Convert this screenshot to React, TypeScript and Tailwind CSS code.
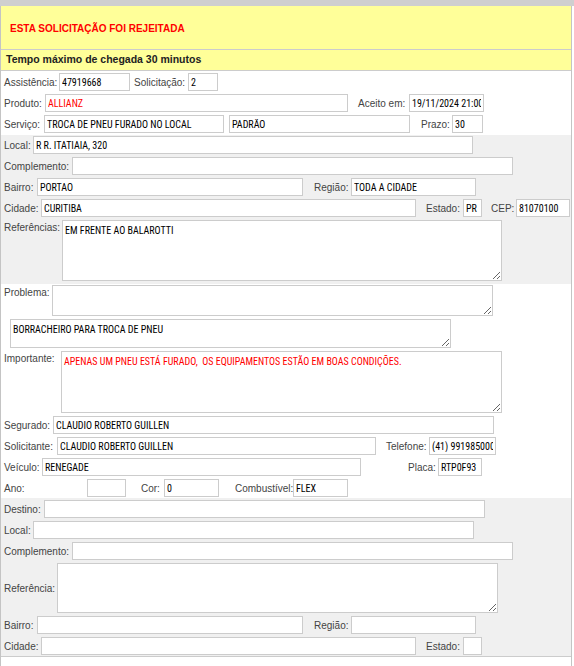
import React from 'react'
import clsx from 'clsx'

interface LabelProps {
  className?: string
  children: React.ReactNode
}

function Label({ className, children }: LabelProps) {
  return (
    <span className={clsx('shrink-0 whitespace-nowrap leading-[13px] text-[#444444]', className)}>
      {children}
    </span>
  )
}

interface FieldProps {
  className?: string
  value?: string
  red?: boolean
}

// values are shown in a narrow face, like the original form
const valueFont =
  'font-["Roboto_Condensed","Noto_Sans_Condensed","Liberation_Sans_Narrow","Noto_Sans",sans-serif] font-stretch-condensed'

function Field({ className, value = '', red }: FieldProps) {
  return (
    <input
      readOnly
      value={value}
      className={clsx(
        'h-[18px] shrink-0 border border-[#cccccc] bg-white px-[2px] text-[10px] outline-none',
        valueFont,
        red ? 'text-[#ff0000]' : 'text-black',
        className
      )}
    />
  )
}

function Area({ className, value = '', red }: FieldProps) {
  return (
    <textarea
      readOnly
      value={value}
      className={clsx(
        'shrink-0 border border-[#cccccc] bg-white px-[2px] py-[3px] text-[10px] leading-[13px] outline-none',
        valueFont,
        red ? 'text-[#ff0000]' : 'text-black',
        className
      )}
    />
  )
}

function Row({ children }: { children: React.ReactNode }) {
  return <div className="flex h-[18px] items-center pl-[3px]">{children}</div>
}

export default function App() {
  return (
    <div className='min-h-[666px] w-[574px] bg-white text-[10px] font-["Liberation_Sans",sans-serif]'>
      {/* top strip */}
      <div className="h-[6px] bg-[#cfcfcf]" />

      <div className="w-[572px] min-h-[660px] border-x border-[#c4c4c4]">
        {/* status header */}
        <div className="flex h-[44px] items-center border-b border-[#cccccc] bg-[#ffff99] pl-[9px] pt-[1px] font-bold text-[#ff0000]">
          ESTA SOLICITAÇÃO FOI REJEITADA
        </div>
        <div className="flex h-[21px] items-center border-b border-[#cccccc] bg-[#ffff99] pl-[5px] text-[10.5px] font-bold text-[#222222]">
          Tempo máximo de chegada 30 minutos
        </div>

        {/* solicitação */}
        <div className="flex flex-col gap-[3px] bg-white pt-[2px] pb-[2px]">
          <Row>
            <Label className="w-[55px]">Assistência:</Label>
            <Field className="w-[71px]" value="47919668" />
            <Label className="ml-[4px] w-[54px]">Solicitação:</Label>
            <Field className="w-[30px]" value="2" />
          </Row>
          <Row>
            <Label className="w-[41px]">Produto:</Label>
            <Field className="w-[303px]" value="ALLIANZ" red />
            <Label className="ml-[10px] w-[51px]">Aceito em:</Label>
            <Field className="w-[75px]" value="19/11/2024 21:00" />
          </Row>
          <Row>
            <Label className="w-[40px]">Serviço:</Label>
            <Field className="w-[180px]" value="TROCA DE PNEU FURADO NO LOCAL" />
            <Field className="ml-[5px] w-[181px]" value="PADRÃO" />
            <Label className="ml-[11px] w-[31px]">Prazo:</Label>
            <Field className="w-[31px]" value="30" />
          </Row>
        </div>

        {/* endereço */}
        <div className="flex flex-col gap-[3px] bg-[#f0f0f0] pt-[1px] pb-[3px]">
          <Row>
            <Label className="w-[29px]">Local:</Label>
            <Field className="w-[440px]" value="R R. ITATIAIA, 320" />
          </Row>
          <Row>
            <Label className="w-[68px]">Complemento:</Label>
            <Field className="w-[441px]" />
          </Row>
          <Row>
            <Label className="w-[33px]">Bairro:</Label>
            <Field className="w-[266px]" value="PORTAO" />
            <Label className="ml-[11px] w-[37px]">Região:</Label>
            <Field className="w-[125px]" value="TODA A CIDADE" />
          </Row>
          <Row>
            <Label className="w-[37px]">Cidade:</Label>
            <Field className="w-[375px]" value="CURITIBA" />
            <Label className="ml-[10px] w-[37px]">Estado:</Label>
            <Field className="w-[19px]" value="PR" />
            <Label className="ml-[9px] w-[25px]">CEP:</Label>
            <Field className="w-[54px]" value="81070100" />
          </Row>
          <div className="flex items-start pl-[3px]">
            <Label className="w-[58px] pt-[1px]">Referências:</Label>
            <Area className="h-[61px] w-[440px]" value="EM FRENTE AO BALAROTTI" />
          </div>
        </div>

        {/* problema e veículo */}
        <div className="flex flex-col gap-[3px] bg-white pt-[1px] pb-[1px]">
          <div className="flex items-start pl-[3px]">
            <Label className="w-[48px] pt-[1px]">Problema:</Label>
            <Area className="h-[31px] w-[441px]" />
          </div>
          <div className="flex items-start pl-[9px]">
            <Area className="h-[29px] w-[441px]" value="BORRACHEIRO PARA TROCA DE PNEU" />
          </div>
          <div className="flex items-start pl-[3px]">
            <Label className="w-[57px] pt-[1px]">Importante:</Label>
            <Area
              className="h-[62px] w-[441px]"
              value="APENAS UM PNEU ESTÁ FURADO,  OS EQUIPAMENTOS ESTÃO EM BOAS CONDIÇÕES."
              red
            />
          </div>
          <Row>
            <Label className="w-[49px]">Segurado:</Label>
            <Field className="w-[441px]" value="CLAUDIO ROBERTO GUILLEN" />
          </Row>
          <Row>
            <Label className="w-[53px]">Solicitante:</Label>
            <Field className="w-[319px]" value="CLAUDIO ROBERTO GUILLEN" />
            <Label className="ml-[10px] w-[43px]">Telefone:</Label>
            <Field className="w-[67px]" value="(41) 991985000" />
          </Row>
          <Row>
            <Label className="w-[38px]">Veículo:</Label>
            <Field className="w-[319px]" value="RENEGADE" />
            <Label className="ml-[47px] w-[30px]">Placa:</Label>
            <Field className="w-[44px]" value="RTP0F93" />
          </Row>
          <Row>
            <Label className="w-[83px]">Ano:</Label>
            <Field className="w-[39px]" />
            <Label className="ml-[15px] w-[23px]">Cor:</Label>
            <Field className="w-[55px]" value="0" />
            <Label className="ml-[16px] w-[58px]">Combustível:</Label>
            <Field className="w-[55px]" value="FLEX" />
          </Row>
        </div>

        {/* destino */}
        <div className="flex flex-col gap-[3px] border-b border-[#cccccc] bg-[#f0f0f0] pt-[2px] pb-[1px]">
          <Row>
            <Label className="w-[40px]">Destino:</Label>
            <Field className="w-[441px]" />
          </Row>
          <Row>
            <Label className="w-[29px]">Local:</Label>
            <Field className="w-[441px]" />
          </Row>
          <Row>
            <Label className="w-[68px]">Complemento:</Label>
            <Field className="w-[441px]" />
          </Row>
          <div className="flex items-center pl-[3px]">
            <Label className="w-[53px]">Referência:</Label>
            <Area className="h-[50px] w-[441px]" />
          </div>
          <Row>
            <Label className="w-[33px]">Bairro:</Label>
            <Field className="w-[266px]" />
            <Label className="ml-[11px] w-[37px]">Região:</Label>
            <Field className="w-[125px]" />
          </Row>
          <Row>
            <Label className="w-[37px]">Cidade:</Label>
            <Field className="w-[375px]" />
            <Label className="ml-[10px] w-[37px]">Estado:</Label>
            <Field className="w-[19px]" />
          </Row>
        </div>
      </div>
    </div>
  )
}
